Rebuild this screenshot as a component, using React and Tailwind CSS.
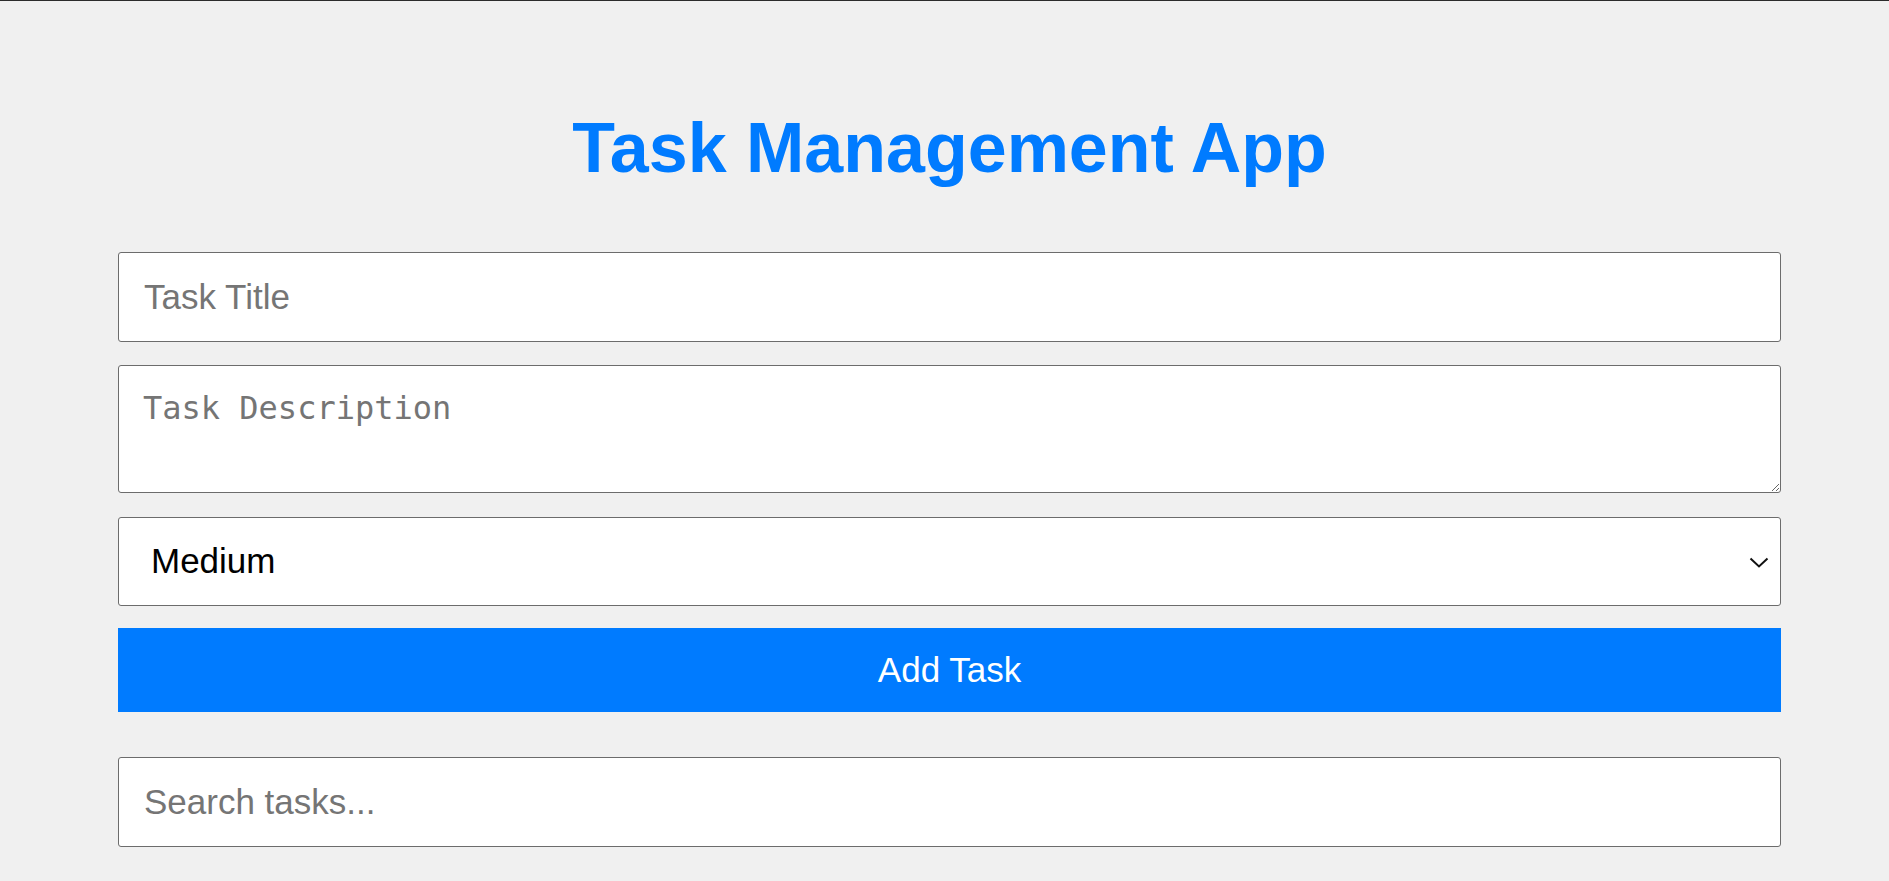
export default function App() {
  const sans = { fontFamily: '"Liberation Sans", Arial, sans-serif' };
  return (
    <div className="min-h-screen bg-[#f0f0f0]" style={sans}>
      <div className="h-px bg-[#2b2b2b]" />
      <div className="ml-[118px] w-[1663px] pt-[107px]">
        <h1 className="text-center text-[70px] leading-[80px] font-bold text-[#007bff] mb-[64px]">
          Task Management App
        </h1>
        <div className="flex flex-col">
          <input
            type="text"
            placeholder="Task Title"
            className="h-[90px] w-full rounded-[3px] border border-[#6c6c6c] bg-white px-[25px] text-[35px] text-black placeholder:text-[#757575] outline-none mb-[23px]"
            style={sans}
          />
          <textarea
            placeholder="Task Description"
            className="h-[128px] w-full rounded-[3px] border border-[#6c6c6c] bg-white px-[24px] pt-[24px] text-[32px] leading-[37px] text-black placeholder:text-[#757575] outline-none mb-[24px]"
            style={{ fontFamily: '"DejaVu Sans Mono", monospace' }}
          />
          <div className="relative mb-[22px]">
            <select
              defaultValue="Medium"
              className="h-[89px] w-full appearance-none rounded-[3px] border border-[#6c6c6c] bg-white pl-[32px] pr-[60px] text-[35px] text-black outline-none"
              style={sans}
            >
              <option>Low</option>
              <option>Medium</option>
              <option>High</option>
            </select>
            <svg
              className="pointer-events-none absolute right-[12px] top-[40px]"
              width="20"
              height="11"
              viewBox="0 0 20 11"
              fill="none"
            >
              <path d="M1.5 1.5 L10 9.5 L18.5 1.5" stroke="#111" strokeWidth="2" />
            </svg>
          </div>
          <button
            className="h-[84px] w-full bg-[#007bff] text-[35px] text-white mb-[45px]"
            style={sans}
          >
            Add Task
          </button>
          <input
            type="text"
            placeholder="Search tasks..."
            className="h-[90px] w-full rounded-[3px] border border-[#6c6c6c] bg-white px-[25px] text-[35px] text-black placeholder:text-[#757575] outline-none"
            style={sans}
          />
        </div>
      </div>
    </div>
  );
}
